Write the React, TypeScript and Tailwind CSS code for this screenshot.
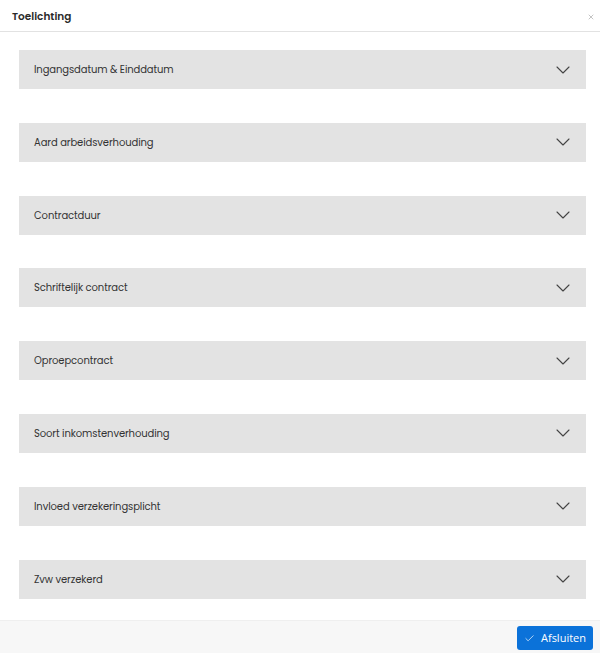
import { ChevronDown, Check, X } from "lucide-react";

const sections = [
  "Ingangsdatum & Einddatum",
  "Aard arbeidsverhouding",
  "Contractduur",
  "Schriftelijk contract",
  "Oproepcontract",
  "Soort inkomstenverhouding",
  "Invloed verzekeringsplicht",
  "Zvw verzekerd",
];

export default function App() {
  return (
    <div className="w-[600px] h-[653px] overflow-hidden bg-white flex flex-col font-['Poppins','Inter',sans-serif] text-[#333]">
      <div className="h-[32px] shrink-0 flex items-center justify-between pt-[3px] pl-[12px] pr-[5px] border-b border-[#e2e2e2]">
        <h2 className="text-[10.5px] font-semibold text-[#2a2a2a]">Toelichting</h2>
        <button className="text-[#888]">
          <X size={8} strokeWidth={1.5} />
        </button>
      </div>

      <div className="flex-1 flex flex-col gap-[33.8px] pt-[18px] pl-[19px] pr-[14px]">
        {sections.map((title) => (
          <div
            key={title}
            className="h-[39px] flex items-center justify-between pl-[15px] pr-[11px] bg-[#e3e3e3]"
          >
            <span className="text-[10px] tracking-[-0.1px]">{title}</span>
            <ChevronDown size={24} strokeWidth={1.1} className="text-[#444]" />
          </div>
        ))}
      </div>

      <div className="h-[33px] shrink-0 flex items-start justify-end pt-[5px] pr-[7px] bg-[#f7f7f7] border-t border-[#efefef]">
        <button className="h-[24px] w-[76px] flex items-center justify-center gap-[6px] rounded-[3px] bg-[#0b72d9] text-white text-[11px] font-medium font-['Open_Sans',sans-serif]">
          <Check size={11} strokeWidth={1.5} />
          Afsluiten
        </button>
      </div>
    </div>
  );
}
